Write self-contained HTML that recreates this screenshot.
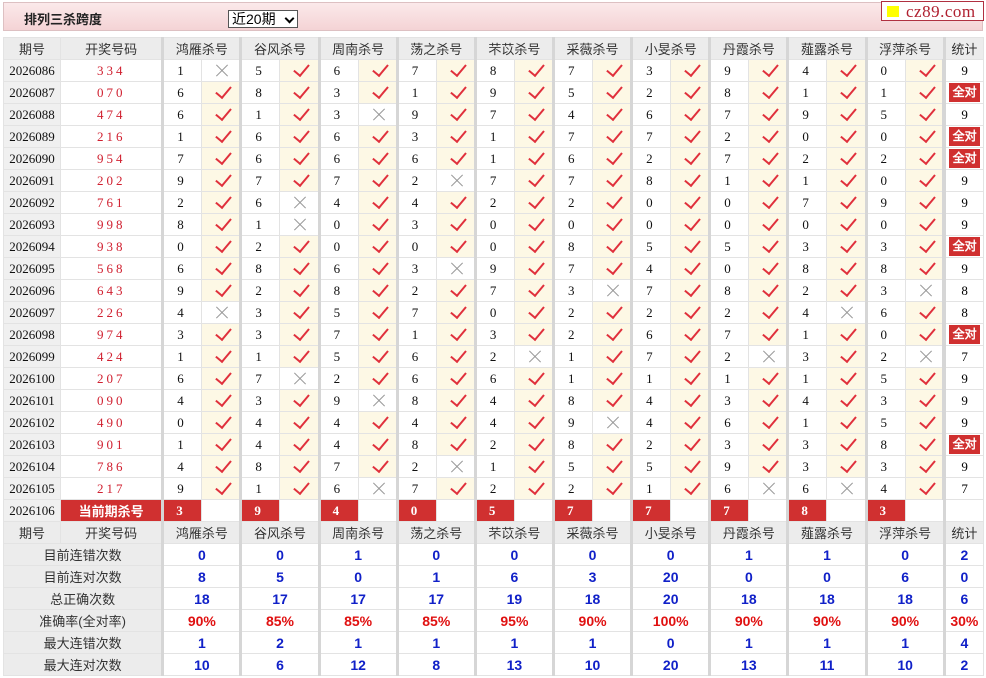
<!DOCTYPE html>
<html><head><meta charset="utf-8">
<style>
body{margin:0;width:986px;height:678px;background:#fff;font-family:"Liberation Sans","Noto Sans CJK SC",sans-serif;overflow:hidden;position:relative}
.top{position:absolute;left:3px;top:2px;width:980px;height:29px;background:linear-gradient(#fbe9ea,#f4d3d5);border:1px solid #ddc0c2;box-sizing:border-box}
.top b{position:absolute;left:20px;top:6px;font-size:13px;color:#222}
.sel{position:absolute;left:224px;top:7px;width:70px;height:18px;border:1px solid #555;background:#fff;font-size:14px;box-sizing:border-box;padding-left:3px;line-height:16px;color:#000}
.sel i{position:absolute;right:4px;top:4px;width:5px;height:5px;border-right:2px solid #000;border-bottom:2px solid #000;transform:rotate(45deg)}
.logo{position:absolute;left:881px;top:1px;width:103px;height:20px;border:1px solid #b03040;background:#fff;font-family:"Liberation Serif",serif;font-size:17px;color:#b02030;line-height:19px;box-sizing:border-box;padding-left:24px;letter-spacing:0.5px}
.logo:before{content:'';position:absolute;left:5px;top:4px;width:12px;height:11px;background:#ffff00}
table{position:absolute;left:3px;top:37px;border-collapse:collapse;table-layout:fixed;width:981px}
td{height:21px;padding:0;border:1px solid #e3e3e3;text-align:center;font-size:13px;position:relative;white-space:nowrap;overflow:hidden}
tr.h td{background:#ececec;color:#333;font-size:13px}
td.p{background:#f0f0f0;font-family:"Liberation Serif",serif;font-size:13px;color:#111}
td.k{color:#d02030;font-family:"Liberation Serif",serif;letter-spacing:3px}
td.n{font-family:"Liberation Serif",serif;text-align:left;padding-left:13px;border-left:3px solid #d6d6d6;color:#111}
td.g{border-left:3px solid #d6d6d6}
td.v{background:#fdf8e5}
td.v:after{content:'';position:absolute;left:17px;top:1px;width:7px;height:13px;border-right:2px solid #e0303c;border-bottom:2px solid #e0303c;transform:rotate(40deg)}
td.x:before,td.x:after{content:'';position:absolute;left:12px;top:10px;width:16px;height:1px;background:#999;transform:rotate(45deg)}
td.x:after{transform:rotate(-45deg)}
td.s{font-family:"Liberation Serif",serif;border-left:4px solid #d6d6d6}
td.a{background:#fff}
td.a span{display:inline-block;background:#d03030;color:#fff;font-weight:bold;font-size:12px;width:31px;height:19px;line-height:19px}
td.r{background:#d03030;color:#fff;font-weight:bold;font-family:"Liberation Serif",serif}
td.rn{background:#d03030;color:#fff;font-weight:bold;font-family:"Liberation Serif",serif;text-align:left;padding-left:12px;border-left:3px solid #d6d6d6}
td.l{background:#ececec;color:#333}
td.b{color:#1020c8;font-weight:bold;font-size:14px}
td.c{color:#e01010;font-weight:bold;font-size:14px}
</style></head><body>
<div class="top"><b>排列三杀跨度</b><div class="sel">近20期<i></i></div></div>
<div class="logo">cz89.com</div>
<table>
<colgroup><col style="width:57px"><col style="width:102px"><col span="20" style="width:39px"><col style="width:39px"></colgroup>
<tr class="h"><td>期号</td><td>开奖号码</td><td colspan="2" class="g">鸿雁杀号</td><td colspan="2" class="g">谷风杀号</td><td colspan="2" class="g">周南杀号</td><td colspan="2" class="g">荡之杀号</td><td colspan="2" class="g">芣苡杀号</td><td colspan="2" class="g">采薇杀号</td><td colspan="2" class="g">小旻杀号</td><td colspan="2" class="g">丹霞杀号</td><td colspan="2" class="g">薤露杀号</td><td colspan="2" class="g">浮萍杀号</td><td class="g">统计</td></tr>
<tr><td class="p">2026086</td><td class="k">334</td><td class="n">1</td><td class="x"></td><td class="n">5</td><td class="v"></td><td class="n">6</td><td class="v"></td><td class="n">7</td><td class="v"></td><td class="n">8</td><td class="v"></td><td class="n">7</td><td class="v"></td><td class="n">3</td><td class="v"></td><td class="n">9</td><td class="v"></td><td class="n">4</td><td class="v"></td><td class="n">0</td><td class="v"></td><td class="s">9</td></tr>
<tr><td class="p">2026087</td><td class="k">070</td><td class="n">6</td><td class="v"></td><td class="n">8</td><td class="v"></td><td class="n">3</td><td class="v"></td><td class="n">1</td><td class="v"></td><td class="n">9</td><td class="v"></td><td class="n">5</td><td class="v"></td><td class="n">2</td><td class="v"></td><td class="n">8</td><td class="v"></td><td class="n">1</td><td class="v"></td><td class="n">1</td><td class="v"></td><td class="s a"><span>全对</span></td></tr>
<tr><td class="p">2026088</td><td class="k">474</td><td class="n">6</td><td class="v"></td><td class="n">1</td><td class="v"></td><td class="n">3</td><td class="x"></td><td class="n">9</td><td class="v"></td><td class="n">7</td><td class="v"></td><td class="n">4</td><td class="v"></td><td class="n">6</td><td class="v"></td><td class="n">7</td><td class="v"></td><td class="n">9</td><td class="v"></td><td class="n">5</td><td class="v"></td><td class="s">9</td></tr>
<tr><td class="p">2026089</td><td class="k">216</td><td class="n">1</td><td class="v"></td><td class="n">6</td><td class="v"></td><td class="n">6</td><td class="v"></td><td class="n">3</td><td class="v"></td><td class="n">1</td><td class="v"></td><td class="n">7</td><td class="v"></td><td class="n">7</td><td class="v"></td><td class="n">2</td><td class="v"></td><td class="n">0</td><td class="v"></td><td class="n">0</td><td class="v"></td><td class="s a"><span>全对</span></td></tr>
<tr><td class="p">2026090</td><td class="k">954</td><td class="n">7</td><td class="v"></td><td class="n">6</td><td class="v"></td><td class="n">6</td><td class="v"></td><td class="n">6</td><td class="v"></td><td class="n">1</td><td class="v"></td><td class="n">6</td><td class="v"></td><td class="n">2</td><td class="v"></td><td class="n">7</td><td class="v"></td><td class="n">2</td><td class="v"></td><td class="n">2</td><td class="v"></td><td class="s a"><span>全对</span></td></tr>
<tr><td class="p">2026091</td><td class="k">202</td><td class="n">9</td><td class="v"></td><td class="n">7</td><td class="v"></td><td class="n">7</td><td class="v"></td><td class="n">2</td><td class="x"></td><td class="n">7</td><td class="v"></td><td class="n">7</td><td class="v"></td><td class="n">8</td><td class="v"></td><td class="n">1</td><td class="v"></td><td class="n">1</td><td class="v"></td><td class="n">0</td><td class="v"></td><td class="s">9</td></tr>
<tr><td class="p">2026092</td><td class="k">761</td><td class="n">2</td><td class="v"></td><td class="n">6</td><td class="x"></td><td class="n">4</td><td class="v"></td><td class="n">4</td><td class="v"></td><td class="n">2</td><td class="v"></td><td class="n">2</td><td class="v"></td><td class="n">0</td><td class="v"></td><td class="n">0</td><td class="v"></td><td class="n">7</td><td class="v"></td><td class="n">9</td><td class="v"></td><td class="s">9</td></tr>
<tr><td class="p">2026093</td><td class="k">998</td><td class="n">8</td><td class="v"></td><td class="n">1</td><td class="x"></td><td class="n">0</td><td class="v"></td><td class="n">3</td><td class="v"></td><td class="n">0</td><td class="v"></td><td class="n">0</td><td class="v"></td><td class="n">0</td><td class="v"></td><td class="n">0</td><td class="v"></td><td class="n">0</td><td class="v"></td><td class="n">0</td><td class="v"></td><td class="s">9</td></tr>
<tr><td class="p">2026094</td><td class="k">938</td><td class="n">0</td><td class="v"></td><td class="n">2</td><td class="v"></td><td class="n">0</td><td class="v"></td><td class="n">0</td><td class="v"></td><td class="n">0</td><td class="v"></td><td class="n">8</td><td class="v"></td><td class="n">5</td><td class="v"></td><td class="n">5</td><td class="v"></td><td class="n">3</td><td class="v"></td><td class="n">3</td><td class="v"></td><td class="s a"><span>全对</span></td></tr>
<tr><td class="p">2026095</td><td class="k">568</td><td class="n">6</td><td class="v"></td><td class="n">8</td><td class="v"></td><td class="n">6</td><td class="v"></td><td class="n">3</td><td class="x"></td><td class="n">9</td><td class="v"></td><td class="n">7</td><td class="v"></td><td class="n">4</td><td class="v"></td><td class="n">0</td><td class="v"></td><td class="n">8</td><td class="v"></td><td class="n">8</td><td class="v"></td><td class="s">9</td></tr>
<tr><td class="p">2026096</td><td class="k">643</td><td class="n">9</td><td class="v"></td><td class="n">2</td><td class="v"></td><td class="n">8</td><td class="v"></td><td class="n">2</td><td class="v"></td><td class="n">7</td><td class="v"></td><td class="n">3</td><td class="x"></td><td class="n">7</td><td class="v"></td><td class="n">8</td><td class="v"></td><td class="n">2</td><td class="v"></td><td class="n">3</td><td class="x"></td><td class="s">8</td></tr>
<tr><td class="p">2026097</td><td class="k">226</td><td class="n">4</td><td class="x"></td><td class="n">3</td><td class="v"></td><td class="n">5</td><td class="v"></td><td class="n">7</td><td class="v"></td><td class="n">0</td><td class="v"></td><td class="n">2</td><td class="v"></td><td class="n">2</td><td class="v"></td><td class="n">2</td><td class="v"></td><td class="n">4</td><td class="x"></td><td class="n">6</td><td class="v"></td><td class="s">8</td></tr>
<tr><td class="p">2026098</td><td class="k">974</td><td class="n">3</td><td class="v"></td><td class="n">3</td><td class="v"></td><td class="n">7</td><td class="v"></td><td class="n">1</td><td class="v"></td><td class="n">3</td><td class="v"></td><td class="n">2</td><td class="v"></td><td class="n">6</td><td class="v"></td><td class="n">7</td><td class="v"></td><td class="n">1</td><td class="v"></td><td class="n">0</td><td class="v"></td><td class="s a"><span>全对</span></td></tr>
<tr><td class="p">2026099</td><td class="k">424</td><td class="n">1</td><td class="v"></td><td class="n">1</td><td class="v"></td><td class="n">5</td><td class="v"></td><td class="n">6</td><td class="v"></td><td class="n">2</td><td class="x"></td><td class="n">1</td><td class="v"></td><td class="n">7</td><td class="v"></td><td class="n">2</td><td class="x"></td><td class="n">3</td><td class="v"></td><td class="n">2</td><td class="x"></td><td class="s">7</td></tr>
<tr><td class="p">2026100</td><td class="k">207</td><td class="n">6</td><td class="v"></td><td class="n">7</td><td class="x"></td><td class="n">2</td><td class="v"></td><td class="n">6</td><td class="v"></td><td class="n">6</td><td class="v"></td><td class="n">1</td><td class="v"></td><td class="n">1</td><td class="v"></td><td class="n">1</td><td class="v"></td><td class="n">1</td><td class="v"></td><td class="n">5</td><td class="v"></td><td class="s">9</td></tr>
<tr><td class="p">2026101</td><td class="k">090</td><td class="n">4</td><td class="v"></td><td class="n">3</td><td class="v"></td><td class="n">9</td><td class="x"></td><td class="n">8</td><td class="v"></td><td class="n">4</td><td class="v"></td><td class="n">8</td><td class="v"></td><td class="n">4</td><td class="v"></td><td class="n">3</td><td class="v"></td><td class="n">4</td><td class="v"></td><td class="n">3</td><td class="v"></td><td class="s">9</td></tr>
<tr><td class="p">2026102</td><td class="k">490</td><td class="n">0</td><td class="v"></td><td class="n">4</td><td class="v"></td><td class="n">4</td><td class="v"></td><td class="n">4</td><td class="v"></td><td class="n">4</td><td class="v"></td><td class="n">9</td><td class="x"></td><td class="n">4</td><td class="v"></td><td class="n">6</td><td class="v"></td><td class="n">1</td><td class="v"></td><td class="n">5</td><td class="v"></td><td class="s">9</td></tr>
<tr><td class="p">2026103</td><td class="k">901</td><td class="n">1</td><td class="v"></td><td class="n">4</td><td class="v"></td><td class="n">4</td><td class="v"></td><td class="n">8</td><td class="v"></td><td class="n">2</td><td class="v"></td><td class="n">8</td><td class="v"></td><td class="n">2</td><td class="v"></td><td class="n">3</td><td class="v"></td><td class="n">3</td><td class="v"></td><td class="n">8</td><td class="v"></td><td class="s a"><span>全对</span></td></tr>
<tr><td class="p">2026104</td><td class="k">786</td><td class="n">4</td><td class="v"></td><td class="n">8</td><td class="v"></td><td class="n">7</td><td class="v"></td><td class="n">2</td><td class="x"></td><td class="n">1</td><td class="v"></td><td class="n">5</td><td class="v"></td><td class="n">5</td><td class="v"></td><td class="n">9</td><td class="v"></td><td class="n">3</td><td class="v"></td><td class="n">3</td><td class="v"></td><td class="s">9</td></tr>
<tr><td class="p">2026105</td><td class="k">217</td><td class="n">9</td><td class="v"></td><td class="n">1</td><td class="v"></td><td class="n">6</td><td class="x"></td><td class="n">7</td><td class="v"></td><td class="n">2</td><td class="v"></td><td class="n">2</td><td class="v"></td><td class="n">1</td><td class="v"></td><td class="n">6</td><td class="x"></td><td class="n">6</td><td class="x"></td><td class="n">4</td><td class="v"></td><td class="s">7</td></tr>
<tr><td class="p">2026106</td><td class="r" style="font-family:'Liberation Sans','Noto Sans CJK SC',sans-serif">当前期杀号</td><td class="rn">3</td><td></td><td class="rn">9</td><td></td><td class="rn">4</td><td></td><td class="rn">0</td><td></td><td class="rn">5</td><td></td><td class="rn">7</td><td></td><td class="rn">7</td><td></td><td class="rn">7</td><td></td><td class="rn">8</td><td></td><td class="rn">3</td><td></td><td class="g"></td></tr>
<tr class="h"><td>期号</td><td>开奖号码</td><td colspan="2" class="g">鸿雁杀号</td><td colspan="2" class="g">谷风杀号</td><td colspan="2" class="g">周南杀号</td><td colspan="2" class="g">荡之杀号</td><td colspan="2" class="g">芣苡杀号</td><td colspan="2" class="g">采薇杀号</td><td colspan="2" class="g">小旻杀号</td><td colspan="2" class="g">丹霞杀号</td><td colspan="2" class="g">薤露杀号</td><td colspan="2" class="g">浮萍杀号</td><td class="g">统计</td></tr>
<tr><td colspan="2" class="l">目前连错次数</td><td colspan="2" class="g b">0</td><td colspan="2" class="g b">0</td><td colspan="2" class="g b">1</td><td colspan="2" class="g b">0</td><td colspan="2" class="g b">0</td><td colspan="2" class="g b">0</td><td colspan="2" class="g b">0</td><td colspan="2" class="g b">1</td><td colspan="2" class="g b">1</td><td colspan="2" class="g b">0</td><td class="g b">2</td></tr>
<tr><td colspan="2" class="l">目前连对次数</td><td colspan="2" class="g b">8</td><td colspan="2" class="g b">5</td><td colspan="2" class="g b">0</td><td colspan="2" class="g b">1</td><td colspan="2" class="g b">6</td><td colspan="2" class="g b">3</td><td colspan="2" class="g b">20</td><td colspan="2" class="g b">0</td><td colspan="2" class="g b">0</td><td colspan="2" class="g b">6</td><td class="g b">0</td></tr>
<tr><td colspan="2" class="l">总正确次数</td><td colspan="2" class="g b">18</td><td colspan="2" class="g b">17</td><td colspan="2" class="g b">17</td><td colspan="2" class="g b">17</td><td colspan="2" class="g b">19</td><td colspan="2" class="g b">18</td><td colspan="2" class="g b">20</td><td colspan="2" class="g b">18</td><td colspan="2" class="g b">18</td><td colspan="2" class="g b">18</td><td class="g b">6</td></tr>
<tr><td colspan="2" class="l">准确率(全对率)</td><td colspan="2" class="g c">90%</td><td colspan="2" class="g c">85%</td><td colspan="2" class="g c">85%</td><td colspan="2" class="g c">85%</td><td colspan="2" class="g c">95%</td><td colspan="2" class="g c">90%</td><td colspan="2" class="g c">100%</td><td colspan="2" class="g c">90%</td><td colspan="2" class="g c">90%</td><td colspan="2" class="g c">90%</td><td class="g c">30%</td></tr>
<tr><td colspan="2" class="l">最大连错次数</td><td colspan="2" class="g b">1</td><td colspan="2" class="g b">2</td><td colspan="2" class="g b">1</td><td colspan="2" class="g b">1</td><td colspan="2" class="g b">1</td><td colspan="2" class="g b">1</td><td colspan="2" class="g b">0</td><td colspan="2" class="g b">1</td><td colspan="2" class="g b">1</td><td colspan="2" class="g b">1</td><td class="g b">4</td></tr>
<tr><td colspan="2" class="l">最大连对次数</td><td colspan="2" class="g b">10</td><td colspan="2" class="g b">6</td><td colspan="2" class="g b">12</td><td colspan="2" class="g b">8</td><td colspan="2" class="g b">13</td><td colspan="2" class="g b">10</td><td colspan="2" class="g b">20</td><td colspan="2" class="g b">13</td><td colspan="2" class="g b">11</td><td colspan="2" class="g b">10</td><td class="g b">2</td></tr>
</table>
</body></html>
